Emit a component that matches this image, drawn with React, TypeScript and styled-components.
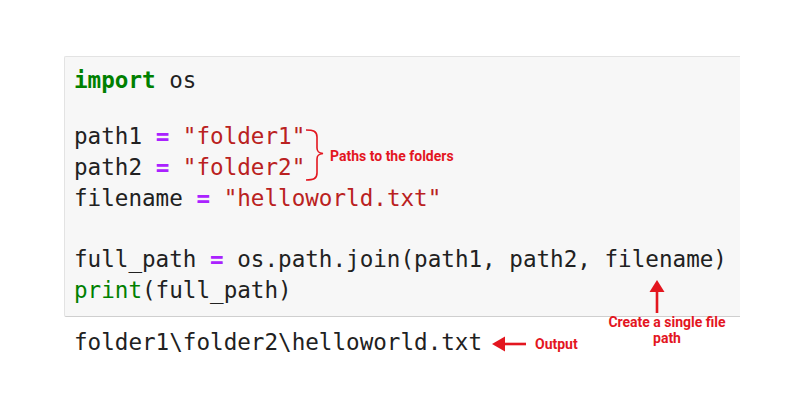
import React from "react";
import styled, { createGlobalStyle } from "styled-components";

const Global = createGlobalStyle`
  html, body { margin: 0; padding: 0; background: #ffffff; }
  body { width: 800px; height: 420px; overflow: hidden; }
`;

const Page = styled.div`
  position: relative;
  width: 800px;
  height: 420px;
  box-sizing: border-box;
  padding: 56px 0 0 64px;
  background: #ffffff;
`;

const Cell = styled.div`
  width: 676px;
  box-sizing: border-box;
  background: #f7f7f7;
  border: 1px solid #e3e3e3;
  border-right: none;
  border-bottom: 1px solid #cfcfcf;
  border-radius: 2px 0 0 2px;
  padding: 8px 0 10px 9px;
`;

const Line = styled.div<{ $gap?: number }>`
  font-family: "DejaVu Sans Mono", "Liberation Mono", monospace;
  font-size: 22.6px;
  line-height: 31px;
  height: 31px;
  color: #212121;
  white-space: pre;
  margin-top: ${(p) => p.$gap ?? 0}px;
`;

const Kw = styled.span<{ $bold?: boolean }>`
  color: #008000;
  font-weight: ${(p) => (p.$bold ? 700 : 400)};
`;

const Op = styled.span`
  color: #aa22ff;
  font-weight: 700;
`;

const Str = styled.span`
  color: #ba2121;
`;

const Output = styled(Line)`
  padding-left: 10px;
  margin-top: 10px;
`;

const Note = styled.div<{ $center?: boolean }>`
  position: absolute;
  font-family: Roboto, "Liberation Sans", sans-serif;
  font-weight: 700;
  font-size: 14px;
  line-height: 16px;
  color: #e3161f;
  text-align: ${(p) => (p.$center ? "center" : "left")};
  white-space: nowrap;
`;

const Drawing = styled.svg`
  position: absolute;
  overflow: visible;
`;

export default function App() {
  return (
    <>
      <Global />
      <Page>
        <Cell>
          <Line>
            <Kw $bold>import</Kw> os
          </Line>
          <Line $gap={25}>
            path1 <Op>=</Op> <Str>"folder1"</Str>
          </Line>
          <Line>
            path2 <Op>=</Op> <Str>"folder2"</Str>
          </Line>
          <Line>
            filename <Op>=</Op> <Str>"helloworld.txt"</Str>
          </Line>
          <Line $gap={30}>
            full_path <Op>=</Op> os.path.join(path1, path2, filename)
          </Line>
          <Line>
            <Kw>print</Kw>(full_path)
          </Line>
        </Cell>
        <Output>folder1\folder2\helloworld.txt</Output>

        <Drawing style={{ left: 304, top: 126 }} width="24" height="58" viewBox="0 0 24 58">
          <path
            d="M2 4 C9 4 13 5 13 11 L13 22 C13 26 15 27 19 27.5 C15 28 13 29 13 33 L13 47 C13 53 9 54 2 54"
            fill="none"
            stroke="#e3161f"
            strokeWidth="1.6"
          />
        </Drawing>
        <Note style={{ left: 330, top: 148 }}>Paths to the folders</Note>

        <Drawing style={{ left: 648, top: 278 }} width="18" height="36" viewBox="0 0 18 36">
          <path d="M9 2 L16.5 14 L1.5 14 Z" fill="#e3161f" />
          <rect x="7.7" y="12" width="2.6" height="23" fill="#e3161f" />
        </Drawing>
        <Note $center style={{ left: 604, top: 314, width: 126 }}>
          Create a single file
          <br />
          path
        </Note>

        <Drawing style={{ left: 490, top: 335 }} width="38" height="18" viewBox="0 0 38 18">
          <path d="M2 9 L15 1.5 L15 16.5 Z" fill="#e3161f" />
          <rect x="13" y="7.7" width="23" height="2.6" fill="#e3161f" />
        </Drawing>
        <Note style={{ left: 535, top: 336 }}>Output</Note>
      </Page>
    </>
  );
}
